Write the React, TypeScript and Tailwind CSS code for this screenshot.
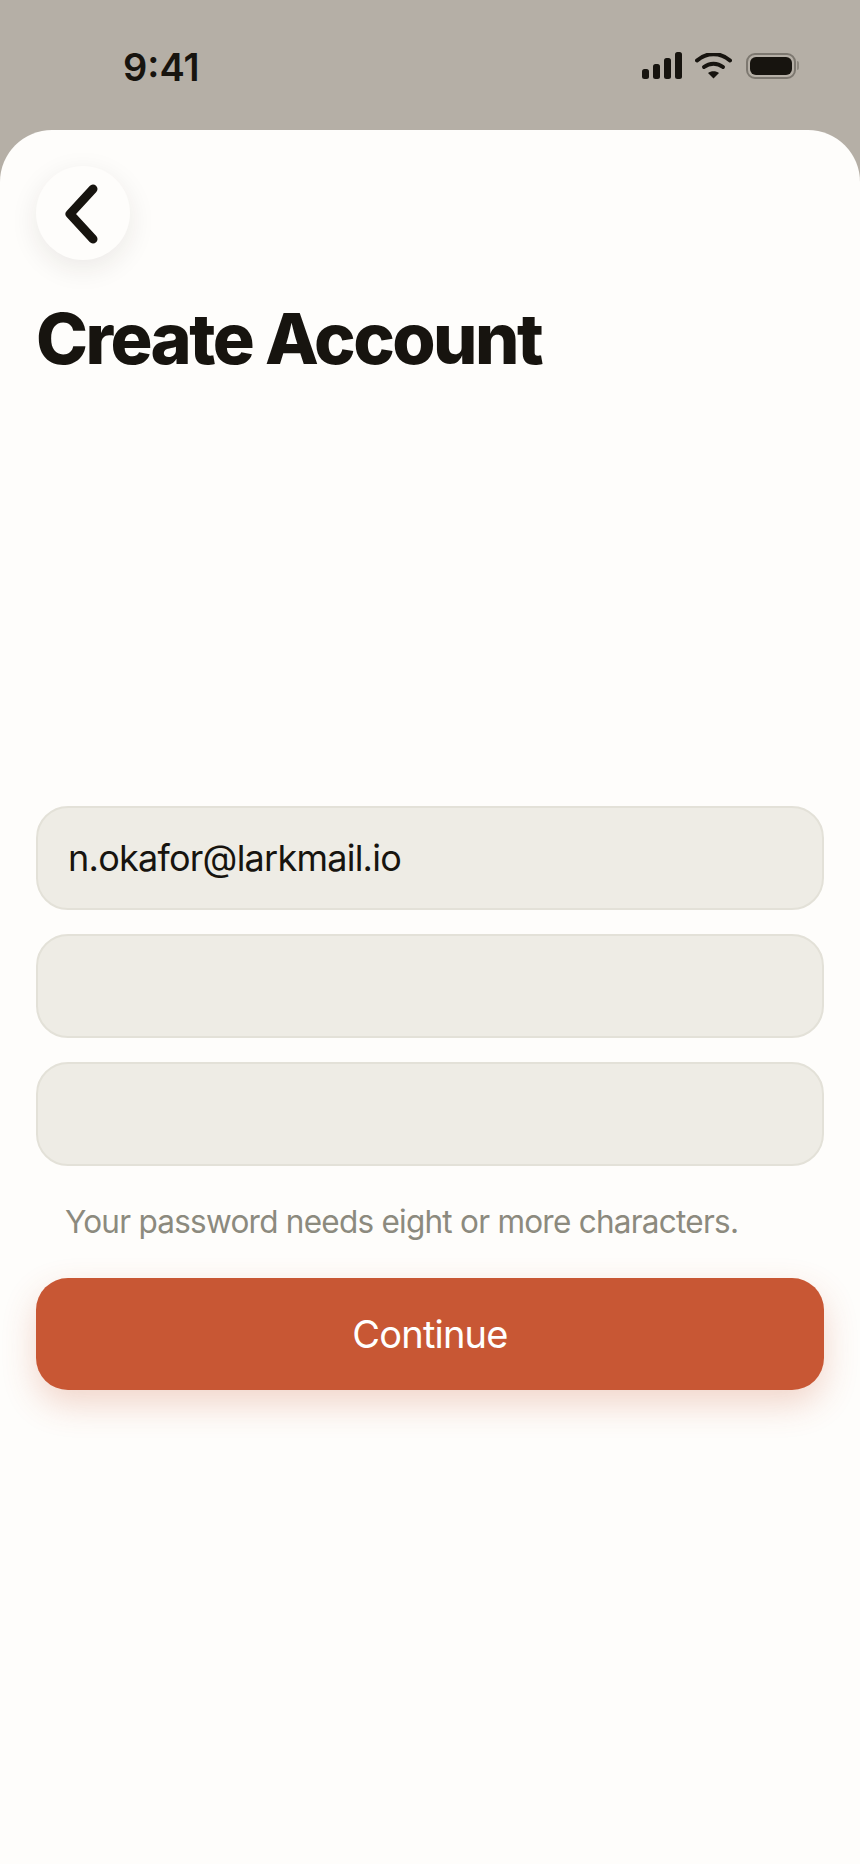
const inter = "font-['Inter',sans-serif]"

function StatusIcons() {
  return (
    <div className="flex items-center gap-[12px]">
      {/* signal */}
      <svg width="41" height="27" viewBox="0 0 41 27" fill="#17140f">
        <rect x="0" y="17" width="7" height="10" rx="2.5" />
        <rect x="11" y="12" width="7" height="15" rx="2.5" />
        <rect x="22" y="6" width="7" height="21" rx="2.5" />
        <rect x="33" y="0" width="7" height="27" rx="2.5" />
      </svg>
      {/* wifi */}
      <svg width="37" height="26" viewBox="0 0 37 26" fill="none" stroke="#17140f" strokeWidth="4" strokeLinecap="round">
        <path d="M2 7.5C11.5 -1 25.5 -1 35 7.5" />
        <path d="M9 14C14.5 9.5 22.5 9.5 28 14" />
        <path d="M13 20L18.5 25.5L24 20C21 17.5 16 17.5 13 20Z" fill="#17140f" stroke="none" />
      </svg>
      {/* battery */}
      <div className="flex items-center ml-[2px]">
        <div className="w-[50px] h-[26px] rounded-[9px] border-[2px] border-[#7d7870] p-[2px]">
          <div className="w-full h-full rounded-[6px] bg-[#17140f]" />
        </div>
        <div className="w-[2px] h-[9px] rounded-r-sm bg-[#8d887f] ml-[1px]" />
      </div>
    </div>
  )
}

function Field({ value }: { value?: string }) {
  return (
    <div className="h-[104px] rounded-[32px] border-2 border-[#e3e1d8] bg-[#eeece5] flex items-center pl-[30px] text-[36px] tracking-[-0.75px] text-[#17140f]">
      {value}
    </div>
  )
}

export default function App() {
  return (
    <div className={`${inter} w-[860px] h-[1864px] bg-[#b5afa6] overflow-hidden`}>
      {/* status bar */}
      <div className="h-[130px] flex justify-between pl-[123px] pr-[61px] pt-[44px]">
        <div className="text-[38px] leading-[46px] font-semibold text-[#17140f]">9:41</div>
        <div className="pt-[8px]">
          <StatusIcons />
        </div>
      </div>

      {/* sheet */}
      <div className="h-[1734px] bg-[#fefdfb] rounded-t-[52px] px-[36px] pt-[36px]">
        <button className="w-[94px] h-[94px] rounded-full bg-[#fefdfb] shadow-[0_8px_28px_rgba(40,30,20,0.09)] flex items-center justify-center">
          <svg width="36" height="66" viewBox="0 0 36 66" fill="none" stroke="#17140f" strokeWidth="9" strokeLinecap="round" strokeLinejoin="round">
            <path d="M28 9L5 34L28 59" />
          </svg>
        </button>

        <h1 className="mt-[39px] text-[70px] leading-[80px] font-[770] tracking-[-2.55px] text-[#17140f]">
          Create Account
        </h1>

        <div className="mt-[427px] flex flex-col gap-[24px]">
          <Field value="n.okafor@larkmail.io" />
          <Field />
          <Field />
        </div>

        <p className="mt-[36px] pl-[29px] text-[31.5px] leading-[40px] tracking-[-0.75px] text-[#8c8a7e]">
          Your password needs eight or more characters.
        </p>

        <button className="mt-[36px] w-full h-[112px] rounded-[32px] bg-[#c85734] text-white text-[38px] tracking-[-0.8px] shadow-[0_14px_34px_rgba(200,87,52,0.24)]">
          Continue
        </button>
      </div>
    </div>
  )
}
